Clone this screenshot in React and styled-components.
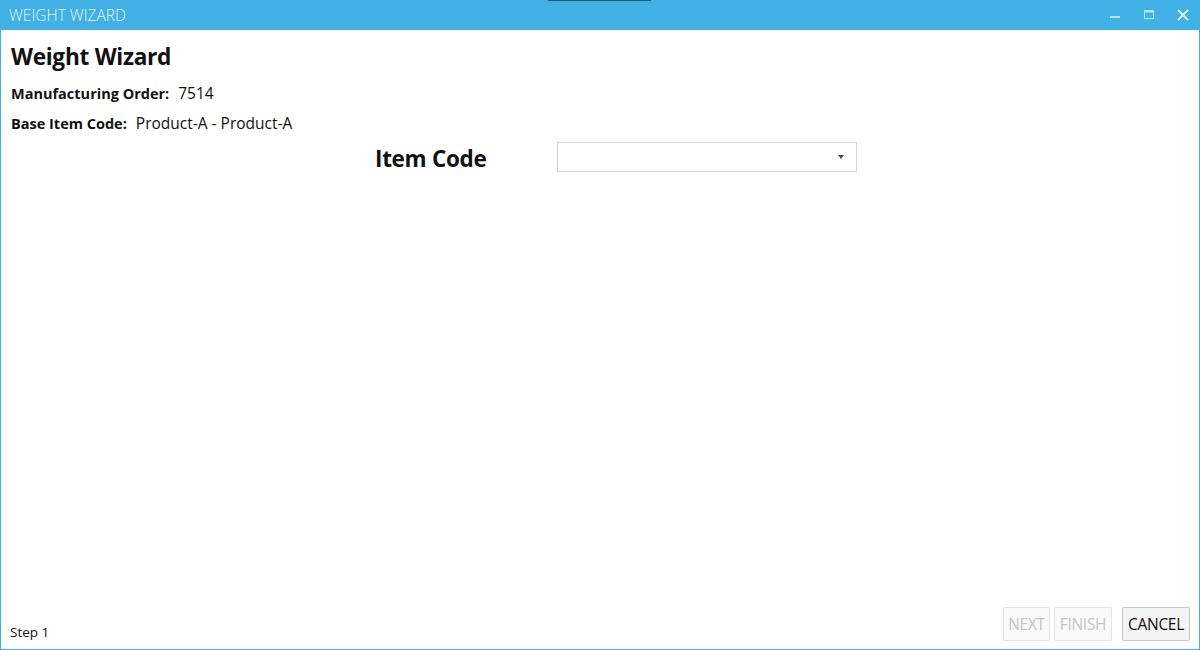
import React from 'react';
import styled, { createGlobalStyle } from 'styled-components';

const Global = createGlobalStyle`
  html, body { margin: 0; padding: 0; background: #fff; }
  body { font-family: "Open Sans", "Noto Sans", sans-serif; color: #111; }
`;

const Window = styled.div`
  width: 1200px;
  height: 650px;
  box-sizing: border-box;
  border: 1px solid #41b0e4;
  border-top: none;
  display: flex;
  flex-direction: column;
  background: #fff;
`;

const TitleBar = styled.div`
  position: relative;
  height: 30px;
  flex-shrink: 0;
  margin: 0 -1px;
  background: #41b0e4;
  display: flex;
  align-items: center;
  justify-content: space-between;
  padding: 0 0 0 9px;
`;

const TitleText = styled.span`
  font-family: "Open Sans", sans-serif;
  font-weight: 300;
  font-size: 15.5px;
  color: #e9f6fc;
`;

const Notch = styled.div`
  position: absolute;
  top: 0;
  left: 548px;
  width: 103px;
  height: 1px;
  background: #27566c;
`;

const Controls = styled.div`
  display: flex;
  align-items: center;
  height: 100%;
`;

const CtrlButton = styled.div`
  width: 34px;
  height: 30px;
  display: flex;
  align-items: center;
  justify-content: center;
`;

const Body = styled.div`
  flex: 1;
  padding: 11px 10px 0;
  display: flex;
  flex-direction: column;
`;

const Heading = styled.h1`
  margin: 0 0 10px;
  font-size: 22.7px;
  font-weight: 700;
  line-height: 32px;
  letter-spacing: -0.3px;
`;

const InfoRow = styled.div`
  display: flex;
  align-items: baseline;
  gap: 9px;
  line-height: 20px;
  margin-bottom: 9px;
`;

const InfoLabel = styled.span`
  font-size: 14.5px;
  font-weight: 700;
`;

const InfoValue = styled.span`
  font-size: 15.5px;
`;

const FieldRow = styled.div`
  display: flex;
  align-items: flex-start;
  margin-left: 364px;
  margin-top: -1px;
`;

const FieldLabel = styled.span`
  width: 182px;
  padding-top: 2px;
  font-size: 22.5px;
  line-height: 30px;
  font-weight: 700;
  letter-spacing: -0.3px;
`;

const Combo = styled.div`
  width: 300px;
  height: 30px;
  box-sizing: border-box;
  border: 1px solid #d4d4d4;
  display: flex;
  align-items: center;
  justify-content: flex-end;
  padding-right: 12px;
`;

const Footer = styled.div`
  display: flex;
  align-items: flex-end;
  justify-content: space-between;
  padding: 0 9px 8px 9px;
`;

const StepText = styled.span`
  font-size: 13.5px;
  line-height: 18px;
`;

const Buttons = styled.div`
  display: flex;
  gap: 4px;
`;

const Button = styled.button`
  font-family: "Open Sans", sans-serif;
  font-size: 15.5px;
  height: 34px;
  padding: 0 3px;
  min-width: ${p => p.$w}px;
  margin-left: ${p => p.$gap || 0}px;
  border: 1px solid ${p => (p.disabled ? '#e4e4e4' : '#c8c8c8')};
  background: ${p => (p.disabled ? '#fafafa' : '#f4f4f4')};
  color: ${p => (p.disabled ? '#c4c4c4' : '#111')};
  letter-spacing: -0.3px;
  border-radius: 2px;
`;

export default function App() {
  return (
    <>
      <Global />
      <Window>
        <TitleBar>
          <TitleText>WEIGHT WIZARD</TitleText>
          <Notch />
          <Controls>
            <CtrlButton>
              <svg width="10" height="10" viewBox="0 0 10 10">
                <rect x="0" y="6" width="10" height="2" fill="#b8e2f5" />
              </svg>
            </CtrlButton>
            <CtrlButton>
              <svg width="10" height="10" viewBox="0 0 10 10">
                <rect x="0.5" y="0.5" width="9" height="8" fill="none" stroke="#b8e2f5" />
                <rect x="0.5" y="0.5" width="9" height="2" fill="#b8e2f5" />
              </svg>
            </CtrlButton>
            <CtrlButton>
              <svg width="12" height="12" viewBox="0 0 12 12">
                <path d="M1 1 L11 11 M11 1 L1 11" stroke="#d8f0fa" strokeWidth="2" />
              </svg>
            </CtrlButton>
          </Controls>
        </TitleBar>
        <Body>
          <Heading>Weight Wizard</Heading>
          <InfoRow>
            <InfoLabel>Manufacturing Order:</InfoLabel>
            <InfoValue>7514</InfoValue>
          </InfoRow>
          <InfoRow>
            <InfoLabel>Base Item Code:</InfoLabel>
            <InfoValue>Product-A - Product-A</InfoValue>
          </InfoRow>
          <FieldRow>
            <FieldLabel>Item Code</FieldLabel>
            <Combo>
              <svg width="6" height="4" viewBox="0 0 6 4">
                <path d="M0 0 L6 0 L3 4 Z" fill="#444" />
              </svg>
            </Combo>
          </FieldRow>
        </Body>
        <Footer>
          <StepText>Step 1</StepText>
          <Buttons>
            <Button disabled $w={47}>NEXT</Button>
            <Button disabled $w={58}>FINISH</Button>
            <Button $w={68} $gap={6}>CANCEL</Button>
          </Buttons>
        </Footer>
      </Window>
    </>
  );
}
